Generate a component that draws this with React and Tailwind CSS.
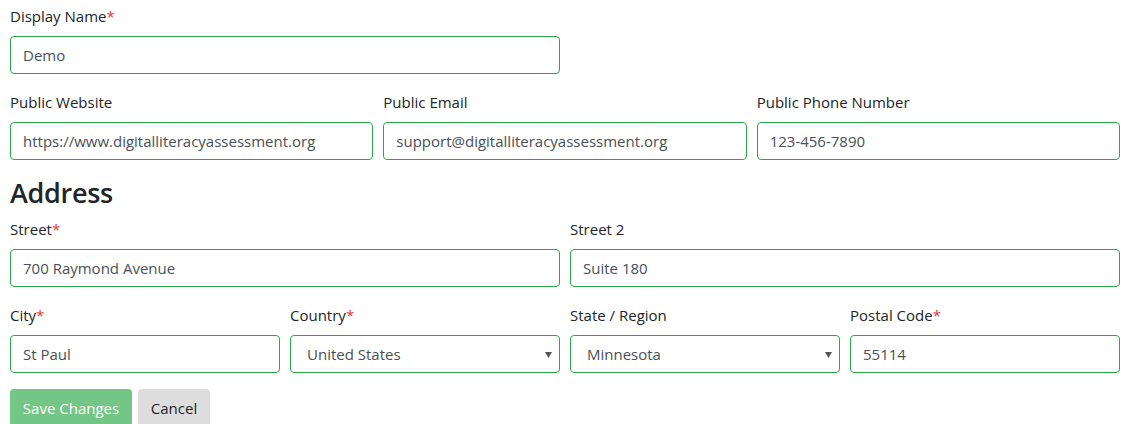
import React from "react";

const font = { fontFamily: '"Open Sans", "Noto Sans", sans-serif' };

function Label({ children, req }) {
  return (
    <label className="block mb-2 leading-6 text-[15px] text-[#212529]">
      {children}
      {req && <span className="text-[#dc3545]">*</span>}
    </label>
  );
}

function Input({ value }) {
  return (
    <div className="h-[38px] w-full rounded border border-[#28a745] bg-white px-3 flex items-center text-[15px] text-[#495057]">
      {value}
    </div>
  );
}

function Select({ value }) {
  return (
    <div className="h-[38px] w-full rounded border border-[#28a745] bg-white pl-4 pr-[7px] flex items-center justify-between text-[15px] text-[#495057]">
      <span className="mt-[1px]">{value}</span>
      <svg width="7" height="6" viewBox="0 0 7 6" className="mt-[1px]">
        <path d="M0 0 H7 L3.5 6 Z" fill="#555" />
      </svg>
    </div>
  );
}

function Field({ label, req, value, select }) {
  return (
    <div className="mb-4">
      <Label req={req}>{label}</Label>
      {select ? <Select value={value} /> : <Input value={value} />}
    </div>
  );
}

export default function App() {
  return (
    <div className="w-[1125px] h-[424px] overflow-hidden bg-white pl-[10px] pr-[5px] pt-1" style={font}>
      <div className="grid grid-cols-2 gap-x-[10px]">
        <Field label="Display Name" req value="Demo" />
      </div>
      <div className="grid grid-cols-3 gap-x-[10px]">
        <Field label="Public Website" value="https://www.digitalliteracyassessment.org" />
        <Field label="Public Email" value="support@digitalliteracyassessment.org" />
        <Field label="Public Phone Number" value="123-456-7890" />
      </div>
      <h3 className="text-[27px] leading-[1.2] font-semibold tracking-[-0.3px] text-[#212529] mb-2 pt-[1px] h-[33px]">Address</h3>
      <div className="grid grid-cols-2 gap-x-[10px]">
        <Field label="Street" req value="700 Raymond Avenue" />
        <Field label="Street 2" value="Suite 180" />
      </div>
      <div className="grid grid-cols-4 gap-x-[10px]">
        <Field label="City" req value="St Paul" />
        <Field label="Country" req value="United States" select />
        <Field label="State / Region" value="Minnesota" select />
        <Field label="Postal Code" req value="55114" />
      </div>
      <div className="flex gap-[6px]">
        <button className="h-[38px] w-[122px] rounded bg-[#73c686] text-white text-[15px]">Save Changes</button>
        <button className="h-[38px] w-[72px] rounded bg-[#dddddd] text-[#212529] text-[15px]">Cancel</button>
      </div>
    </div>
  );
}
